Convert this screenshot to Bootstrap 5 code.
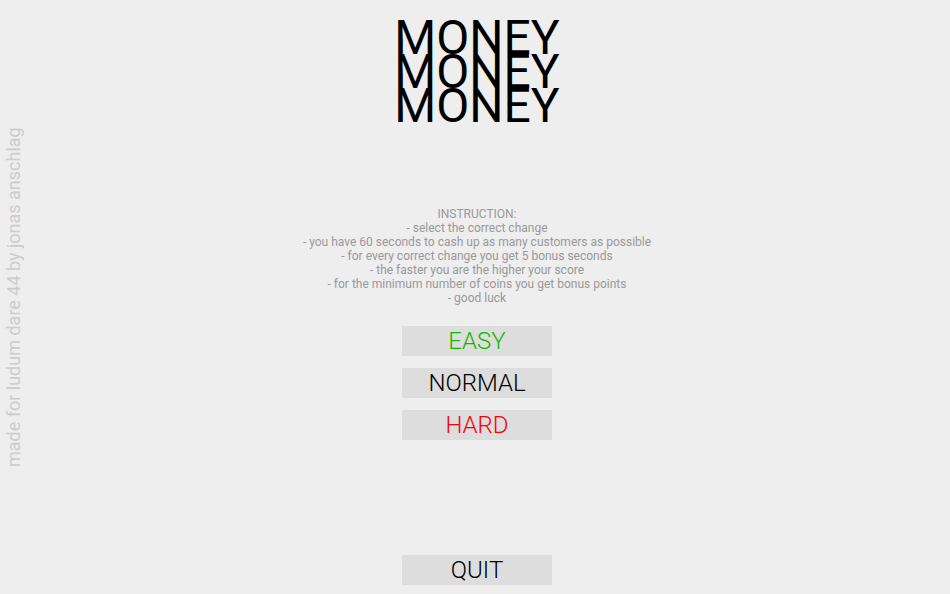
<!DOCTYPE html>
<html lang="en">
<head>
<meta charset="utf-8">
<meta name="viewport" content="width=device-width, initial-scale=1">
<title>Money Money Money</title>
<link href="https://cdn.jsdelivr.net/npm/bootstrap@5.3.0/dist/css/bootstrap.min.css" rel="stylesheet">
<style>
body { background: #eee; font-family: Roboto, "Liberation Sans", sans-serif; color: #000; }
.credit { writing-mode: vertical-rl; transform: rotate(180deg); font-size: 18px; line-height: 20px; color: #ccc; width: 28px; padding-right: 4px; }
.menu { margin-right: 24px; }
.game-title { font-size: 48px; line-height: 34px; font-weight: 400; padding-top: 21px; }
.rules { font-size: 12px; line-height: 14px; color: #999; margin-top: 84px; }
.levels { gap: 12px; margin-top: 21px; }
.game-btn { width: 150px; height: 30px; background: #ddd; border: 0; border-radius: 0; padding: 0; font-size: 24px; line-height: 30px; font-weight: 300; color: #000; }
.easy { color: #0fb800; }
.hard { color: #f00; }
.quit { margin-bottom: 9px; }
</style>
</head>
<body>
<div class="d-flex min-vh-100">
  <aside class="credit text-center">made for ludum dare 44 by jonas anschlag</aside>
  <main class="menu flex-grow-1 d-flex flex-column align-items-center text-center">
    <h1 class="game-title mb-0">MONEY<br>MONEY<br>MONEY</h1>
    <section class="rules">
      <div>INSTRUCTION:</div>
      <div>- select the correct change</div>
      <div>- you have 60 seconds to cash up as many customers as possible</div>
      <div>- for every correct change you get 5 bonus seconds</div>
      <div>- the faster you are the higher your score</div>
      <div>- for the minimum number of coins you get bonus points</div>
      <div>- good luck</div>
    </section>
    <div class="levels d-flex flex-column">
      <button type="button" class="btn game-btn easy">EASY</button>
      <button type="button" class="btn game-btn">NORMAL</button>
      <button type="button" class="btn game-btn hard">HARD</button>
    </div>
    <button type="button" class="btn game-btn quit mt-auto">QUIT</button>
  </main>
</div>
<script src="https://cdn.jsdelivr.net/npm/bootstrap@5.3.0/dist/js/bootstrap.bundle.min.js"></script>
</body>
</html>
